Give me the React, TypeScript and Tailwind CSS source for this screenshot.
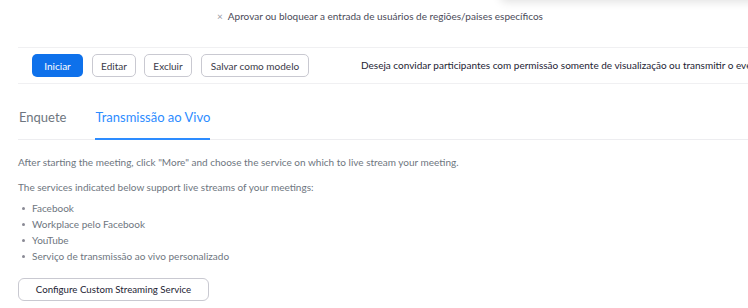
import React from "react";

const services = [
  "Facebook",
  "Workplace pelo Facebook",
  "YouTube",
  "Serviço de transmissão ao vivo personalizado",
];

const OutlineButton = ({ label, w }: { label: string; w: string }) => (
  <button className={`h-[23px] ${w} rounded-[5px] border border-[#c9c9d1] bg-white text-[10px] text-[#3a3a48] leading-none`}>
    {label}
  </button>
);

export default function App() {
  return (
    <div className="relative w-[748px] h-[308px] overflow-hidden bg-white font-['Lato','Liberation_Sans',sans-serif]">
      {/* popup edge peeking from above */}
      <div className="absolute -top-[40px] left-[500px] w-[320px] h-[40px] bg-white rounded-md shadow-[0_2px_10px_rgba(0,0,0,0.12)]" />

      <div className="pt-[10px] h-[47px] flex items-start pl-[217px]">
        <span className="text-[10px] leading-[12px] text-[#9a9aa5] mr-[5px]">×</span>
        <span className="text-[10px] leading-[12px] text-[#4a4a58]">
          Aprovar ou bloquear a entrada de usuários de regiões/paises específicos
        </span>
      </div>

      <div className="ml-[18px] border-t border-b border-[#f0f0f2] h-[37px] flex items-center pl-[14px] whitespace-nowrap">
        <div className="flex items-center gap-[8px]">
          <button className="h-[23px] w-[51px] mr-[1px] rounded-[5px] bg-[#0e71eb] text-white text-[10px] leading-none">
            Iniciar
          </button>
          <OutlineButton label="Editar" w="w-[44px]" />
          <OutlineButton label="Excluir" w="w-[48px]" />
          <OutlineButton label="Salvar como modelo" w="w-[108px] ml-[1px]" />
        </div>
        <span className="ml-[52px] text-[10px] text-[#232333]">
          Deseja convidar participantes com permissão somente de visualização ou transmitir o evento ao vivo?
        </span>
      </div>

      <div className="ml-[18px] flex items-end border-b border-[#ededf0] h-[56px]">
        <div className="pl-[1px] pb-[14px] text-[13px] leading-[16px] text-[#6e7680]">Enquete</div>
        <div className="ml-[29px] pb-[13px] -mb-px border-b-2 border-[#2d8cff] text-[13px] leading-[16px] text-[#2d8cff]">
          Transmissão ao Vivo
        </div>
      </div>

      <div className="pl-[18px] text-[10px] text-[#6e7680] whitespace-nowrap">
        <p className="mt-[16px] leading-[12px]">
          After starting the meeting, click "More" and choose the service on which to live stream your meeting.
        </p>
        <p className="mt-[13px] leading-[12px]">
          The services indicated below support live streams of your meetings:
        </p>
        <ul className="mt-[7px]">
          {services.map((s) => (
            <li key={s} className="flex items-center h-[16px]">
              <span className="w-[3px] h-[3px] rounded-full bg-[#8a8a95] ml-[4px] mr-[7px]" />
              {s}
            </li>
          ))}
        </ul>
        <button className="mt-[14px] w-[191px] h-[23px] rounded-[6px] border border-[#c9c9d1] bg-white text-[9.7px] text-[#232333] leading-none">
          Configure Custom Streaming Service
        </button>
      </div>
    </div>
  );
}
